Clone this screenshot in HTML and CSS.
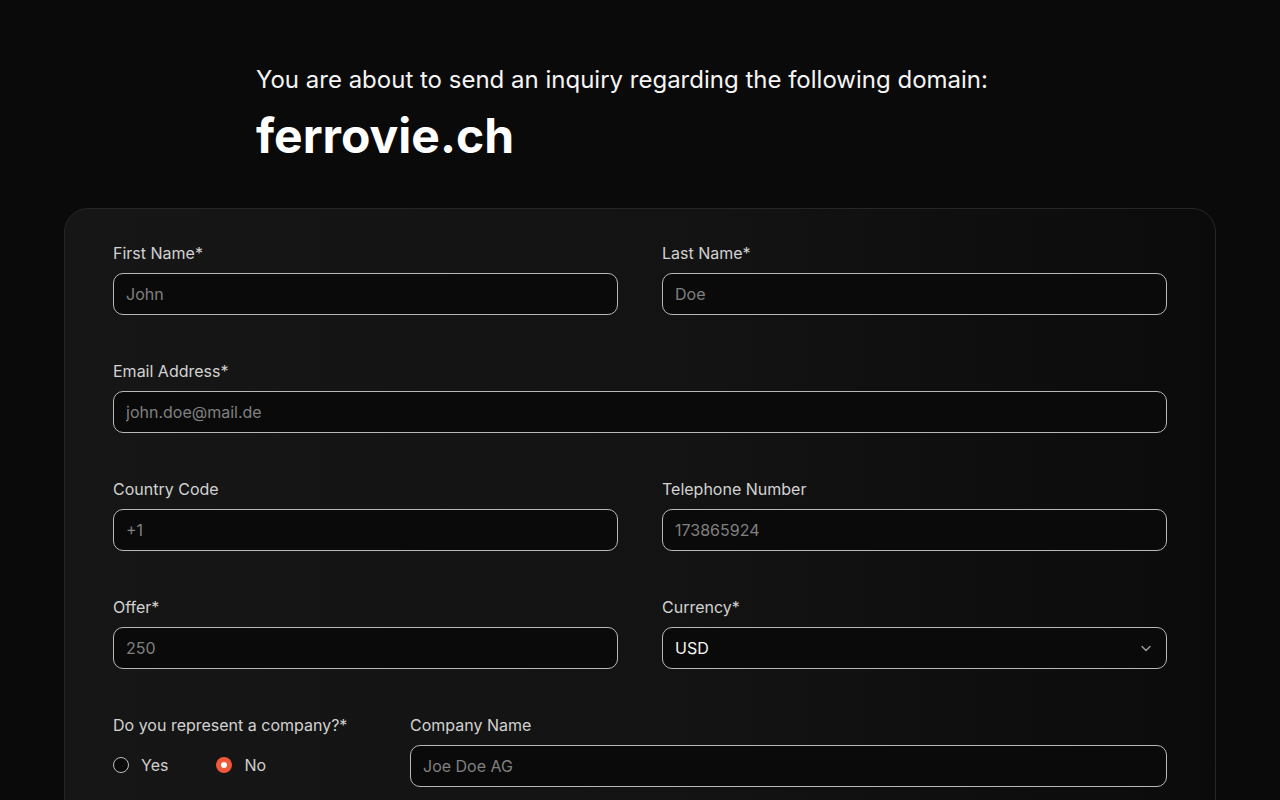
FILE: index.html
```html
<!DOCTYPE html>
<html lang="en">
<head>
<meta charset="utf-8">
<title>Inquiry</title>
<link rel="stylesheet" href="styles.css">
</head>
<body>
<header class="intro">
  <p class="intro-text">You are about to send an inquiry regarding the following domain:</p>
  <h1 class="domain">ferrovie.ch</h1>
</header>
<main class="card">
  <form class="form">
    <div class="row two">
      <div class="field">
        <label class="label">First Name*</label>
        <input class="input" type="text" placeholder="John">
      </div>
      <div class="field">
        <label class="label">Last Name*</label>
        <input class="input" type="text" placeholder="Doe">
      </div>
    </div>
    <div class="row">
      <div class="field">
        <label class="label">Email Address*</label>
        <input class="input" type="email" placeholder="john.doe@mail.de">
      </div>
    </div>
    <div class="row two">
      <div class="field">
        <label class="label">Country Code</label>
        <input class="input" type="text" placeholder="+1">
      </div>
      <div class="field">
        <label class="label">Telephone Number</label>
        <input class="input" type="text" placeholder="173865924">
      </div>
    </div>
    <div class="row two">
      <div class="field">
        <label class="label">Offer*</label>
        <input class="input" type="text" placeholder="250">
      </div>
      <div class="field">
        <label class="label">Currency*</label>
        <div class="select">
          <span class="select-value">USD</span>
          <svg class="chevron" width="14" height="14" viewBox="0 0 14 14"><path d="M3 5.5 7 9.5l4-4" fill="none" stroke="#9a9a9a" stroke-width="1.5" stroke-linecap="round" stroke-linejoin="round"/></svg>
        </div>
      </div>
    </div>
    <div class="row company">
      <div class="field">
        <label class="label">Do you represent a company?*</label>
        <div class="radios">
          <label class="radio"><span class="dot"></span>Yes</label>
          <label class="radio"><span class="dot checked"></span>No</label>
        </div>
      </div>
      <div class="field">
        <label class="label">Company Name</label>
        <input class="input" type="text" placeholder="Joe Doe AG">
      </div>
    </div>
  </form>
</main>
</body>
</html>
```
FILE: styles.css
```css
* { box-sizing: border-box; }
html, body { margin: 0; padding: 0; }
body {
  background: #0a0a0a;
  color: #ffffff;
  font-family: Inter, "Noto Sans", "Liberation Sans", sans-serif;
  min-height: 100vh;
}
.intro {
  max-width: 768px;
  margin: 0 auto;
  padding-top: 64px;
}
.intro-text {
  margin: 0;
  font-size: 24px;
  line-height: 32px;
  color: #f5f5f5;
}
.domain {
  margin: 12px 0 0;
  font-size: 48px;
  line-height: 56px;
  font-weight: 700;
  color: #ffffff;
}
.card {
  max-width: 1152px;
  margin: 44px auto 0;
  border: 1px solid #262626;
  border-radius: 24px;
  background: linear-gradient(90deg, #161616 0%, #131313 55%, #0b0b0b 100%);
  padding: 34px 48px 48px;
}
.form { display: flex; flex-direction: column; gap: 46px; }
.row { display: grid; grid-template-columns: 1fr; gap: 44px; }
.row.two { grid-template-columns: 1fr 1fr; }
.row.company { grid-template-columns: 253px 1fr; }
.field { display: flex; flex-direction: column; gap: 10px; }
.label {
  font-size: 16px;
  line-height: 20px;
  font-weight: 400;
  color: #d2d2d2;
}
.input, .select {
  height: 42px;
  width: 100%;
  background: #0a0a0a;
  border: 1px solid #b8b8b8;
  border-radius: 10px;
  padding: 0 12px;
  font-family: inherit;
  font-size: 16px;
  color: #f0f0f0;
  outline: none;
}
.input::placeholder { color: #808080; }
.select {
  display: flex;
  align-items: center;
  justify-content: space-between;
  padding-right: 13px;
}
.select-value { color: #f5f5f5; }
.radios {
  display: flex;
  gap: 48px;
  height: 40px;
  align-items: center;
}
.radio {
  display: flex;
  align-items: center;
  gap: 12px;
  font-size: 16px;
  color: #d0d0d0;
}
.dot {
  width: 16px;
  height: 16px;
  border-radius: 50%;
  border: 1px solid #bdbdbd;
  background: #0a0a0a;
}
.dot.checked {
  border: 5px solid #f0583a;
  background: #ffffff;
}
```
